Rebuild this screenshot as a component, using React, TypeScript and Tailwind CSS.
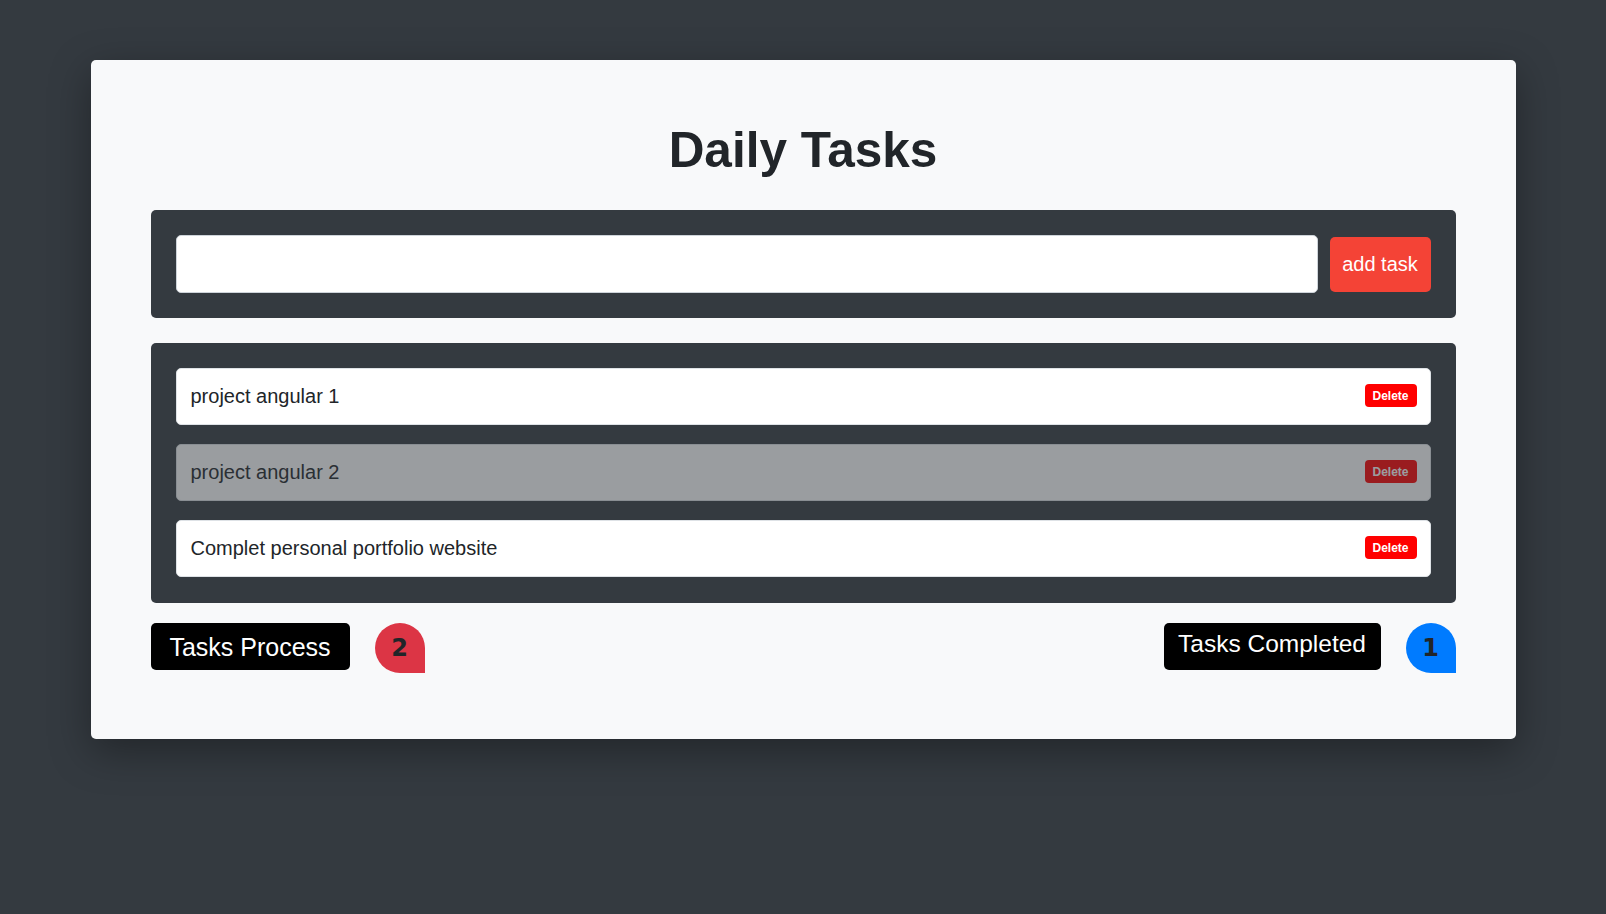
import React from "react";

const tasks = [
  { title: "project angular 1", done: false },
  { title: "project angular 2", done: true },
  { title: "Complet personal portfolio website", done: false },
];

export default function App() {
  return (
    <div
      className="min-h-screen w-full bg-[#343a40] pt-[60px] pb-10"
      style={{ fontFamily: '"Liberation Sans", Arial, sans-serif' }}
    >
      <div className="mx-auto w-[1425px] rounded-[5px] bg-[#f8f9fa] px-[60px] pt-[61px] pb-[66px] shadow-[0_12px_40px_rgba(0,0,0,0.35)]">
        <h1 className="mb-[31px] text-center text-[49.5px] leading-[58px] font-bold text-[#212529]">
          Daily Tasks
        </h1>

        <div className="flex items-center gap-[12px] rounded-[5px] bg-[#343a40] p-[25px]">
          <input
            type="text"
            className="h-[58px] flex-1 rounded-[5px] border border-[#ced4da] bg-white px-3 text-[20px] text-[#212529] outline-none"
          />
          <button className="h-[55px] w-[101px] rounded-[5px] bg-[#f44336] text-[20px] text-white">
            add task
          </button>
        </div>

        <div className="mt-[25px] flex flex-col gap-[19px] rounded-[5px] bg-[#343a40] px-[25px] pt-[25px] pb-[26px]">
          {tasks.map((t) => (
            <div
              key={t.title}
              className={
                "flex h-[57px] items-center justify-between rounded-[5px] border border-[#dee2e6] bg-white pr-[13px] pl-[14px] " +
                (t.done ? "opacity-50" : "")
              }
            >
              <span className="pb-[2px] text-[20px] text-[#212529]">{t.title}</span>
              <button className="mb-[2px] flex h-[23px] w-[52px] items-center justify-center rounded-[4px] bg-[#ff0000] text-[12px] font-bold text-white">
                Delete
              </button>
            </div>
          ))}
        </div>

        <div className="mt-[20px] flex items-start justify-between">
          <div className="flex items-start gap-[25px]">
            <div className="flex h-[47px] w-[199px] items-center justify-center rounded-[5px] bg-black text-[25px] leading-none text-white">
              <span className="pt-[1px]">Tasks Process</span>
            </div>
            <div
              className="flex h-[50px] w-[50px] items-center justify-center rounded-tl-full rounded-tr-full rounded-bl-full rounded-br-[4px] bg-[#dc3545] text-[24px] font-bold text-[#212529]"
              style={{ fontFamily: '"DejaVu Sans", sans-serif' }}
            >
              2
            </div>
          </div>
          <div className="flex items-start gap-[25px]">
            <div className="flex h-[47px] w-[217px] items-center justify-center rounded-[5px] bg-black text-[24.5px] leading-none text-white">
              <span className="pb-[4px]">Tasks Completed</span>
            </div>
            <div
              className="flex h-[50px] w-[50px] items-center justify-center rounded-tl-full rounded-tr-full rounded-bl-full rounded-br-[4px] bg-[#007bff] text-[24px] font-bold text-[#212529]"
              style={{ fontFamily: '"DejaVu Sans", sans-serif' }}
            >
              1
            </div>
          </div>
        </div>
      </div>
    </div>
  );
}
